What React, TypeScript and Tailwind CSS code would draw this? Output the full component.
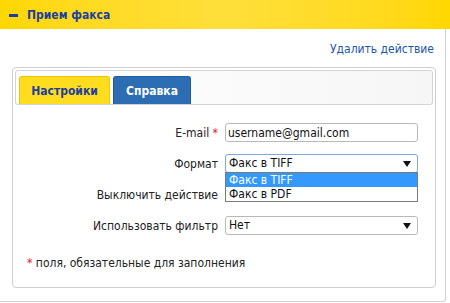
import { useState } from 'react';

const FONT = { fontFamily: '"DejaVu Sans Condensed", "DejaVu Sans", Verdana, sans-serif' };

function Arrow() {
  return (
    <svg width="8" height="6" viewBox="0 0 8 6" className="absolute right-[6px] top-[6px]">
      <path d="M0 0 H8 L4 6 Z" fill="#111" />
    </svg>
  );
}

export default function App() {
  const [tab, setTab] = useState('settings');

  return (
    <div className="w-[450px] h-[303px] bg-white text-[12px] text-[#222]" style={FONT}>
      <div className="w-[446px] h-[302px] border-r border-b border-[#d0d0d0] rounded-br-[4px]">
        {/* Header */}
        <div className="w-[450px] h-[29px] bg-gradient-to-r from-[#ffd700] via-[#fedf3a] to-[#ffd700] flex items-center pl-[9px] gap-[9px] text-[#1d3f9e] font-bold text-[12px]">
          <span className="w-[9px] h-[3px] bg-[#1d3f9e] mt-[1px]" />
          <span>Прием факса</span>
        </div>

        <div className="flex justify-end pr-[11px] pt-[12px] h-[38px]">
          <a className="text-[#1d56a8] text-[12px] leading-[16px] cursor-pointer">Удалить действие</a>
        </div>

        {/* Panel */}
        <div className="ml-[12px] w-[424px] h-[221px] border border-[#cfcfcf] rounded-[4px] p-[2px]">
          <div className="h-[35px] border border-[#d4d4d4] rounded-[3px] bg-gradient-to-r from-white to-[#f6f6f6] flex items-end pl-[3px] gap-[3px]">
            <button
              onClick={() => setTab('settings')}
              className={`w-[91px] h-[28px] border border-b-0 rounded-t-[3px] font-bold text-[12px] ${
                tab === 'settings' ? 'bg-[#fedc1e] border-[#f1c400] text-[#1d3f9e]' : 'bg-[#2c6db3] border-[#1e5aa0] text-white'
              }`}
            >
              Настройки
            </button>
            <button
              onClick={() => setTab('help')}
              className={`w-[78px] h-[28px] border border-b-0 rounded-t-[3px] font-bold text-[12px] ${
                tab === 'help' ? 'bg-[#fedc1e] border-[#f1c400] text-[#1d3f9e]' : 'bg-[#2c6db3] border-[#1e5aa0] text-white'
              }`}
            >
              Справка
            </button>
          </div>

          <div className="relative mt-[18px]">
            <div className="grid grid-cols-[203px_193px] gap-x-[7px] gap-y-[12px] items-center">
              <div className="text-right leading-[18px]">
                E-mail <span className="text-[#e8202a]">*</span>
              </div>
              <input
                defaultValue="username@gmail.com"
                className="h-[19px] border border-[#b9b9b9] rounded-[3px] px-[2px] text-[12px] text-[#111] outline-none"
                style={FONT}
              />

              <div className="text-right leading-[18px]">Формат</div>
              <div className="relative h-[19px] border border-[#7fa7e0] rounded-[3px] pl-[3px] leading-[17px] text-[#111]">
                Факс в TIFF
                <Arrow />
                <div className="absolute left-[-1px] top-[17px] w-[193px] border border-[#7a7a7a] bg-white z-10 leading-[14px]">
                  <div className="bg-[#3399ff] text-white pl-[3px] h-[14px]">Факс в TIFF</div>
                  <div className="pl-[3px] h-[14px] text-[#111]">Факс в PDF</div>
                </div>
              </div>

              <div className="text-right leading-[18px]">Выключить действие</div>
              <div className="h-[19px]" />

              <div className="text-right leading-[18px]">Использовать фильтр</div>
              <div className="relative h-[19px] border border-[#b9b9b9] rounded-[3px] pl-[3px] leading-[17px] text-[#111]">
                Нет
                <Arrow />
              </div>
            </div>

            <div className="mt-[19px] pl-[12px] text-[12px]">
              <span className="text-[#e8202a]">*</span> поля, обязательные для заполнения
            </div>
          </div>
        </div>
      </div>
    </div>
  );
}
